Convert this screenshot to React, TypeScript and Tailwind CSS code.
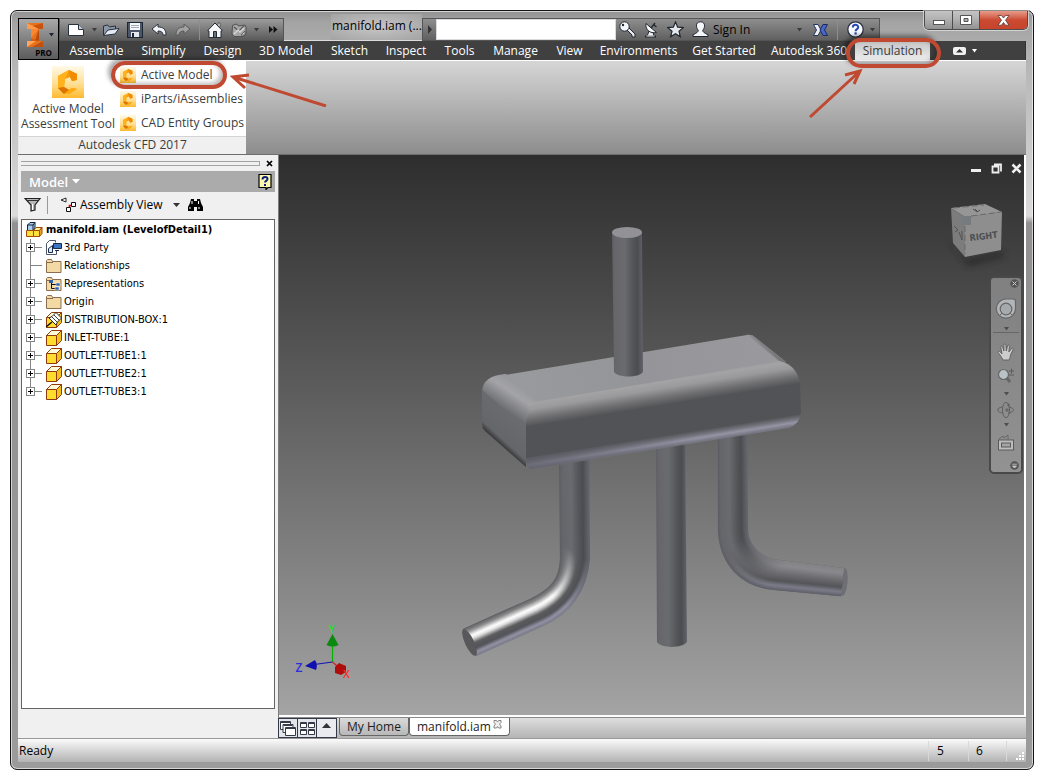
import React from "react";

type Pt = [number, number];

/* ---------- small icons ---------- */

const NewFileIcon = () => (
  <svg width="18" height="16" viewBox="0 0 18 16">
    <path d="M1.500 2.500h10l5 5v6h-15z" fill="#fdfdfd" stroke="#26303f" />
    <path d="M11.500 2.500v5h5" fill="#c9d0dc" stroke="#26303f" />
  </svg>
);
const OpenIcon = () => (
  <svg width="18" height="16" viewBox="0 0 18 16">
    <path d="M1.500 13V4l4-1 2 2 6-1v3" fill="#8d97a8" stroke="#26303f" />
    <path d="M1.500 13.500 6 8l11-1.500-4 5.500z" fill="#e6ebf3" stroke="#26303f" />
  </svg>
);
const SaveIcon = () => (
  <svg width="16" height="16" viewBox="0 0 16 16">
    <rect x=".5" y=".5" width="15" height="15" fill="#4b5768" stroke="#1c2532" />
    <rect x="3" y="1" width="10" height="7" fill="#f4f6fa" />
    <path d="M4 3.500h8M4 5.500h8" stroke="#a0a8b5" />
    <rect x="4" y="10" width="8" height="5" fill="#e4e8ef" />
    <rect x="5" y="11" width="2" height="4" fill="#1c2532" />
  </svg>
);
const UndoIcon = ({ dim = false }: { dim?: boolean }) => (
  <svg width="16" height="14" viewBox="0 0 16 14" className={dim ? "-scale-x-100" : ""}>
    <path
      d="M1 6 7 1v3c5 0 8 2 8 8h-3c0-3-2-4-5-4v3z"
      fill={dim ? "#a2a2a2" : "#f2f4f8"}
      stroke={dim ? "#5a5a5a" : "#2b3443"}
    />
  </svg>
);
const HomeIcon = () => (
  <svg width="16" height="16" viewBox="0 0 16 16">
    <path d="M11 1h2v4h-2z" fill="#f4f4f4" stroke="#222" strokeWidth=".6" />
    <path d="M.700 8.500 8 1l7.300 7.500-1.300.5v6.500H2V9z" fill="#f8f8f8" stroke="#222b38" />
    <path d="M6.500 15V9.500h3V15" fill="#68727f" stroke="#222b38" />
  </svg>
);
const UpdateIcon = () => (
  <svg width="16" height="16" viewBox="0 0 16 16">
    <path d="M1.500 3.500 5 2l3 2 6-1 1 2v7l-3 2.500H3L1 12z" fill="#a6a6a6" stroke="#505050" />
    <path d="m3 5 5 4 5-5" fill="none" stroke="#555" strokeWidth="1.200" />
    <path d="m3 12 4-4 2 2 4-4" fill="none" stroke="#dadada" strokeWidth="1.400" />
    <path d="M10 13h4V9z" fill="#cfcfcf" stroke="#505050" strokeWidth=".8" />
  </svg>
);
const Caret = ({ className = "text-[#3a3a3a]" }: { className?: string }) => (
  <svg width="7" height="4" viewBox="0 0 7 4" className={className}>
    <path d="M1 0h5L3.500 3.500z" fill="currentColor" />
  </svg>
);
const KeyIcon = () => (
  <svg width="17" height="17" viewBox="0 0 17 17">
    <path d="m7 8 2-2 7 7v3h-3v-2l-1-1-1-1-1-1z" fill="#e9ebf0" stroke="#20262f" />
    <circle cx="5.500" cy="5.500" r="4.700" fill="#f6f7fa" stroke="#20262f" />
    <circle cx="4" cy="4" r="1.200" fill="#20262f" />
  </svg>
);
const DishIcon = () => (
  <svg width="15" height="17" viewBox="0 0 15 17">
    <path d="M3 15.500 5 10l4 1 1 4.500z" fill="#eef0f4" stroke="#20262f" />
    <path d="M2 2.500c-1 6 4 10.500 10.500 9z" fill="#f6f7fa" stroke="#20262f" />
    <path d="m7 7 4-5M9.500 3.500l3 2.500" stroke="#20262f" strokeWidth="1.300" />
    <path d="M1 15.500h11" stroke="#20262f" strokeWidth="2" />
    <path d="M2.500 15h8" stroke="#f6f7fa" />
  </svg>
);
const StarIcon = () => (
  <svg width="17" height="17" viewBox="0 0 17 17">
    <path
      d="m8.500 1 2.200 5.200 5.600.4-4.300 3.700 1.400 5.500-4.900-3-4.900 3L5 10.300.700 6.600l5.600-.4z"
      fill="#e4e7ec"
      stroke="#20262f"
      strokeWidth="1.200"
    />
  </svg>
);
const UserIcon = () => (
  <svg width="17" height="17" viewBox="0 0 17 17">
    <path
      d="M8.500.800c-3 0-4.300 2-4 4.500.2 2 1 3 1.800 4-.2 2-1.800 2.700-5.300 4.500v1.700h15v-1.700c-3.500-1.800-5.100-2.500-5.300-4.500.8-1 1.600-2 1.800-4 .3-2.500-1-4.500-4-4.500z"
      fill="#f4f5f8"
      stroke="#20262f"
    />
  </svg>
);
const ExchangeIcon = () => (
  <svg width="15" height="14" viewBox="0 0 15 14">
    <path d="M.500 1.500H5L8 7l-3 5.500H.500L3.500 7z" fill="#eef1fa" stroke="#27355e" />
    <path d="M14.500 1.500H10L7 7l3 5.500h4.500L11.500 7z" fill="#4668c8" stroke="#1b2a66" />
  </svg>
);
const HelpIcon = () => (
  <svg width="17" height="17" viewBox="0 0 17 17">
    <circle cx="8.500" cy="8.500" r="7.700" fill="#f7f9ff" stroke="#2a3140" strokeWidth="1.300" />
    <path d="M5.800 6.500c0-3.600 5.600-3.400 5.400-.3 0 2-2.600 1.900-2.600 4" fill="none" stroke="#274bb0" strokeWidth="2" />
    <rect x="7.500" y="11.300" width="2.200" height="2.200" fill="#274bb0" />
  </svg>
);

const CfdIcon = ({ size }: { size: number }) => (
  <svg width={size} height={size} viewBox="0 0 32 32" className="shrink-0">
    <defs>
      <linearGradient id="cfdBg" x1="0" y1="0" x2="0" y2="1">
        <stop offset="0" stopColor="#fff9e8" />
        <stop offset=".55" stopColor="#ffdf94" />
        <stop offset="1" stopColor="#fdb92e" />
      </linearGradient>
    </defs>
    <rect width="32" height="32" fill="url(#cfdBg)" />
    <path d="M6 10 17 4l8 4v6l-5 1-2-4-5 2-1 8 5 3 3-2 5 1-8 5H12l-6-6z" fill="#f59c0b" />
    <path d="m6 10 11-6-4 9-1 8-6 1z" fill="#ffb21c" />
    <path d="m17 4 8 4v6l-5 1-2-4z" fill="#f38b00" />
    <path d="m12 21 5 3-5 4-6-6z" fill="#dd7300" />
    <path d="m17 24 3-2 5 1-8 5h-5z" fill="#ffab12" />
  </svg>
);

const ProLogo = () => (
  <svg width="18" height="26" viewBox="0 0 18 26">
    <path d="M1 1h16v6h-4v12h4v6H1v-6h4V7H1z" fill="#e8711c" />
    <path d="m1 1 12 6H1z" fill="#ff9a4a" />
    <path d="M17 1v6h-4L7 4z" fill="#c9530d" />
    <path d="M5 7h8L5 16z" fill="#f98632" />
    <path d="M13 7v12H9z" fill="#b84a0b" />
    <path d="m5 16 8 3-8 1z" fill="#d35e12" />
    <path d="M1 25v-6l9 0z" fill="#ffa55e" />
    <path d="M17 19v6H6z" fill="#bf500f" />
  </svg>
);

/* ---------- tree icons ---------- */

const FolderIcon = ({ views = false }: { views?: boolean }) => (
  <svg width="16" height="16" viewBox="0 0 16 16">
    <path d="M.500 14.500v-12l1-1h4l1 2h8.500v11z" fill="#f3d9a4" stroke="#8b6d4f" />
    <path d="M1 4.500h6" stroke="#8b6d4f" />
    {views && (
      <g>
        <path d="M5.500 6v6.500H10M5.500 8.500H11" fill="none" stroke="#111" />
        <rect x="3" y="4" width="4" height="3" fill="#2f5fae" />
        <rect x="10" y="7" width="4" height="3" fill="#2f5fae" stroke="#fff" strokeWidth=".5" />
        <rect x="9" y="11" width="4" height="3" fill="#2f5fae" stroke="#fff" strokeWidth=".5" />
      </g>
    )}
  </svg>
);
const PartIcon = ({ pinned = false }: { pinned?: boolean }) => (
  <svg width="16" height="16" viewBox="0 0 16 16">
    <path d="M.500 5.500h10v10H.500z" fill="#ffdc2e" stroke="#8e3a0a" />
    <path d="m.500 5.500 5-5h10l-5 5z" fill="#fffbd8" stroke="#8e3a0a" />
    <path d="m10.500 5.500 5-5v10l-5 5z" fill="#f2c21a" stroke="#8e3a0a" />
    {pinned && (
      <g>
        <path d="m0 15 6-5" stroke="#111" strokeWidth="1.400" />
        <path d="m3 6 7 7 1.500-3L15.500 6 10 .500 6 4.500z" fill="#fff" stroke="#111" strokeWidth=".9" />
        <path d="m6 5 5 5M8 3l5 5" stroke="#111" strokeWidth=".8" />
      </g>
    )}
  </svg>
);
const AssemblyIcon = () => (
  <svg width="17" height="16" viewBox="0 0 17 16">
    <path d="M1.500 3 4 .500h5V6L7 8.500H1.500z" fill="#a9cdf0" stroke="#12223a" />
    <path d="M1.500 3H7v5.500M7 3 9 .500" fill="none" stroke="#12223a" />
    <path d="M.500 8.500h7v6h-7zM7.500 8.500h6v6h-6z" fill="#ffe03a" stroke="#a04a08" />
    <path d="m7.500 8.500 2.500-3h6l-2.500 3z" fill="#fff3a0" stroke="#a04a08" />
    <path d="m13.500 8.500 2.500-3v6l-2.500 3z" fill="#efa51e" stroke="#a04a08" />
  </svg>
);
const ThirdPartyIcon = () => (
  <svg width="16" height="16" viewBox="0 0 16 16">
    <path d="M9.500 2.500v-2h-6l-3 3v11h10V11" fill="#fff" stroke="#4c5566" />
    <path d="M7.500 3.500h8v5h-8z" fill="#3c74c0" stroke="#16294a" />
    <path d="M9 10.500h4" stroke="#16294a" />
    <path d="m2.500 8.500 4-3v7h-4z" fill="#dfe9f8" stroke="#16294a" />
  </svg>
);

/* ---------- header ---------- */

const ribbonTabs = [
  "Assemble",
  "Simplify",
  "Design",
  "3D Model",
  "Sketch",
  "Inspect",
  "Tools",
  "Manage",
  "View",
  "Environments",
  "Get Started",
  "Autodesk 360",
];

const IconButton = ({ label, children }: { label: string; children: React.ReactNode }) => (
  <button aria-label={label} className="flex h-5 shrink-0 items-center justify-center">
    {children}
  </button>
);

const Header = () => (
  <header className="flex">
    <button
      aria-label="Application menu"
      className="mt-[7px] flex h-[42px] w-[41px] shrink-0 flex-col border border-black bg-gradient-to-b from-[#a9a9a9] to-[#5c5c5c] pl-1 pt-[3px]"
    >
      <span className="flex items-center gap-1 pl-[3px]">
        <ProLogo />
        <Caret className="text-[#1b2433]" />
      </span>
      <span className="pl-[6px] text-[8px] font-bold leading-[9px] text-black">PRO</span>
    </button>
    <div className="flex min-w-0 flex-1 flex-col">
      <div className="-mr-[2px] flex h-[30px] items-end">
        <div className="flex h-[23px] w-[225px] shrink-0 items-center border border-[#555] bg-gradient-to-b from-[#9c9c9c] to-[#5b5b5b] pl-[7px]">
          <IconButton label="New"><NewFileIcon /></IconButton>
          <div className="w-[17px] pl-[6px]"><Caret /></div>
          <IconButton label="Open"><OpenIcon /></IconButton>
          <div className="w-[7px]" />
          <IconButton label="Save"><SaveIcon /></IconButton>
          <div className="w-2" />
          <IconButton label="Undo"><UndoIcon /></IconButton>
          <div className="w-2" />
          <IconButton label="Redo"><UndoIcon dim /></IconButton>
          <div className="ml-2 mr-[7px] h-5 border-l border-[#8d8d8d]" />
          <IconButton label="Home"><HomeIcon /></IconButton>
          <div className="w-2" />
          <IconButton label="Update"><UpdateIcon /></IconButton>
          <div className="w-[22px] pl-[6px]"><Caret /></div>
          <IconButton label="More commands">
            <svg width="9" height="7" viewBox="0 0 9 7"><path d="m0 0 4 3.500L0 7zM4.500 0l4 3.500-4 3.500z" fill="#111" /></svg>
          </IconButton>
        </div>
        <div className="flex-1 self-end border-b border-[#dcdcdc]" />
        <h1 className="h-[27px] w-[91px] shrink-0 whitespace-nowrap border-b border-[#dcdcdc] bg-[radial-gradient(ellipse,#c6c6c6,#a3a3a3)] pl-[1px] text-[12px] leading-6 text-black">
          manifold.iam (...
        </h1>
        <div className="flex h-[23px] w-[458px] shrink-0 items-center border border-[#555] bg-gradient-to-b from-[#8e8e8e] to-[#606060]">
          <svg width="13" height="9" viewBox="0 0 13 9"><path d="m5 0 4 4.500L5 9z" fill="#333" /></svg>
          <input aria-label="Search" className="h-[21px] w-[180px] border border-[#d8dade] bg-white px-1 text-[12px]" />
          <div className="flex items-center gap-2 pl-[3px]">
            <IconButton label="Subscription"><KeyIcon /></IconButton>
            <IconButton label="Communication"><DishIcon /></IconButton>
            <IconButton label="Favorites"><StarIcon /></IconButton>
            <button className="flex items-center gap-1 text-[12px] leading-5 text-black"><UserIcon />Sign In</button>
          </div>
          <div className="ml-auto mr-[10px]"><Caret /></div>
          <IconButton label="Exchange"><ExchangeIcon /></IconButton>
          <div className="mx-[9px] h-5 border-l border-[#8d8d8d]" />
          <IconButton label="Help"><HelpIcon /></IconButton>
          <div className="w-[15px] pl-[5px]"><Caret /></div>
        </div>
        <div className="ml-[44px] flex h-[19px] w-[104px] shrink-0 self-start rounded-b-[5px] border border-t-0 border-[#4c4c4c] shadow-[0_0_0_1px_#ffffff80]">
          <button aria-label="Minimize" className="flex w-7 items-center justify-center rounded-bl border-r border-[#4c4c4c] bg-gradient-to-b from-[#c4c4c4] via-[#b1b1b1] via-45% to-[#929292]">
            <svg width="12" height="5" viewBox="0 0 12 5" className="mt-1"><rect x=".5" y=".5" width="11" height="4" fill="#fff" stroke="#555" /></svg>
          </button>
          <button aria-label="Maximize" className="flex w-[27px] items-center justify-center border-r border-[#4c4c4c] bg-gradient-to-b from-[#c4c4c4] via-[#b1b1b1] via-45% to-[#929292]">
            <svg width="12" height="10" viewBox="0 0 12 10"><path d="M.500.500h11v9H.500zM4 3.500v3h4v-3z" fill="#fff" fillRule="evenodd" stroke="#555" /></svg>
          </button>
          <button aria-label="Close" className="flex flex-1 items-center justify-center rounded-br bg-gradient-to-b from-[#e79c8c] via-[#cb4a32] via-50% to-[#c8432b]">
            <svg width="13" height="11" viewBox="0 0 13 11"><path d="M1 .500h3.500l2 2.500 2-2.500H12L8.500 5.200l3.500 5H8.500l-2-2.700-2 2.700H1l3.500-5z" fill="#fff" stroke="#5a3a3a" strokeWidth=".8" /></svg>
          </button>
        </div>
      </div>
      <nav
        aria-label="Ribbon"
        className="grid h-[19px] grid-cols-[71px_63px_55px_72px_55px_58px_49px_63px_45px_93px_78px_92px_75px_1fr] border-r border-[#333] bg-[#404040] pl-[2px] text-[12px] leading-[19px] text-white"
      >
        {ribbonTabs.map((t) => (
          <button key={t} className="whitespace-nowrap text-center leading-[19px]">{t}</button>
        ))}
        <button className="relative bg-gradient-to-b from-[#c5c3c3] to-[#ededed] text-center leading-[19px] text-[#3a3a3a]">
          Simulation
          <span className="pointer-events-none absolute -left-[9px] -top-[3px] z-10 h-[30px] w-[95px] rounded-full border-4 border-[#bf4a31] shadow-[-3px_-3px_4px_#0006,inset_-3px_-2px_4px_#0004]" />
          <svg width="56" height="52" viewBox="0 0 56 52" className="pointer-events-none absolute -left-[47px] top-[25px] z-10">
            <path d="M2 51 52 5M37 9l15-4-6 13" fill="none" stroke="#bf4a31" strokeWidth="3" />
          </svg>
        </button>
        <div className="flex items-center gap-[5px] pl-[23px]">
          <button aria-label="Minimize ribbon">
            <svg width="13" height="8" viewBox="0 0 13 8"><rect width="13" height="8" rx="2" fill="#f1f1f1" /><path d="M3 5.500h7L6.500 2z" fill="#333" /></svg>
          </button>
          <Caret className="text-white" />
        </div>
      </nav>
    </div>
  </header>
);

const Ribbon = () => (
  <section aria-label="Simulation tools" className="relative flex h-[95px] border-b border-t border-t-white border-b-[#6e6e6e] bg-gradient-to-b from-[#d6d6d6] to-[#8d8d8d] text-[12px] text-[#3c3c3c]">
    <div className="flex w-[228px] flex-col border-l border-[#e8e8e8] bg-white">
      <div className="flex flex-1">
        <button className="flex w-[98px] shrink-0 flex-col items-center pt-[5px] leading-[15px]">
          <CfdIcon size={32} />
          <span className="mt-[3px] whitespace-nowrap">Active Model</span>
          <span className="whitespace-nowrap">Assessment Tool</span>
        </button>
        <div className="flex flex-col pl-[3px] pt-[2px]">
          <button className="relative flex h-6 items-center gap-[5px] whitespace-nowrap">
            <CfdIcon size={16} />
            Active Model
            <span className="pointer-events-none absolute -left-[9px] -top-[2px] h-7 w-[116px] rounded-full border-4 border-[#bf4a31] shadow-[-3px_-3px_4px_#0005,inset_-3px_-2px_4px_#0004]" />
          </button>
          <button className="flex h-6 items-center gap-[5px] whitespace-nowrap"><CfdIcon size={16} />iParts/iAssemblies</button>
          <button className="flex h-6 items-center gap-[5px] whitespace-nowrap"><CfdIcon size={16} />CAD Entity Groups</button>
        </div>
      </div>
      <div className="h-[18px] border-t border-[#d4d4d4] bg-[#f0f0f0] text-center leading-4">Autodesk CFD 2017</div>
    </div>
    <svg width="97" height="34" viewBox="0 0 97 34" className="pointer-events-none absolute left-[212px] top-[12px]">
      <path d="M96 33 3 4M15 15 3 4l16-2" fill="none" stroke="#bf4a31" strokeWidth="3" />
    </svg>
  </section>
);

/* ---------- model browser ---------- */

const treeItems: { label: string; icon: React.ReactNode; leaf?: boolean }[] = [
  { label: "3rd Party", icon: <ThirdPartyIcon /> },
  { label: "Relationships", icon: <FolderIcon />, leaf: true },
  { label: "Representations", icon: <FolderIcon views /> },
  { label: "Origin", icon: <FolderIcon /> },
  { label: "DISTRIBUTION-BOX:1", icon: <PartIcon pinned /> },
  { label: "INLET-TUBE:1", icon: <PartIcon /> },
  { label: "OUTLET-TUBE1:1", icon: <PartIcon /> },
  { label: "OUTLET-TUBE2:1", icon: <PartIcon /> },
  { label: "OUTLET-TUBE3:1", icon: <PartIcon /> },
];

const TreeBranch = ({ leaf, last }: { leaf?: boolean; last?: boolean }) => (
  <svg width="20" height="18" viewBox="0 0 20 18" shapeRendering="crispEdges">
    <path d={last ? "M6.500 0v9M6 8.500h12" : "M6.500 0v18M6 8.500h12"} stroke="#848484" fill="none" />
    {!leaf && (
      <g>
        <rect x="2.500" y="4.500" width="8" height="8" fill="#fff" stroke="#848484" />
        <path d="M4 8.500h5M6.500 6v5" stroke="#000" />
      </g>
    )}
  </svg>
);

const Browser = () => (
  <aside className="flex w-[260px] shrink-0 flex-col bg-[#f0f0f0] pl-[3px] pr-[3px]">
    <div className="flex h-4 items-center gap-[6px]">
      <div className="h-[5px] flex-1 border border-l-0 border-[#a3a3a3]" />
      <button aria-label="Close panel" className="w-[9px]">
        <svg width="7" height="7" viewBox="0 0 7 7"><path d="m1 1 5 5M6 1 1 6" stroke="#000" strokeWidth="1.700" /></svg>
      </button>
    </div>
    <div className="flex h-[21px] items-center justify-between bg-[#ababab] pl-2 pr-[3px]">
      <button className="flex items-center gap-1 text-[13px] font-semibold leading-5 text-white">
        Model
        <svg width="8" height="5" viewBox="0 0 8 5"><path d="M0 0h8L4 4.500z" fill="#fff" /></svg>
      </button>
      <button aria-label="Help on browser">
        <svg width="14" height="16" viewBox="0 0 14 16">
          <path d="M1 .500h12v13h-3l-2 2v-2H1z" fill="#fff9b0" stroke="#000" strokeWidth="1.200" />
          <path d="M4.500 5.500c0-3.500 5-3.300 5-.5 0 1.800-2.500 1.800-2.500 3.500M7 10v2" fill="none" stroke="#0a1e82" strokeWidth="2" />
        </svg>
      </button>
    </div>
    <div className="flex h-[27px] items-center pb-[2px] pl-[3px] text-[12px] text-black">
      <button aria-label="Filter">
        <svg width="18" height="15" viewBox="0 0 18 15">
          <path d="M1 1.500h15L11 8v5l-4 1V8z" fill="#b9b9b9" stroke="#222" strokeWidth="1.200" />
          <path d="M3 3.500h11" stroke="#333" />
          <path d="M8.500 7v6" stroke="#fff" />
        </svg>
      </button>
      <div className="ml-[5px] h-[18px] border-l border-[#999]" />
      <button className="ml-3 flex items-center gap-[3px] whitespace-nowrap">
        <svg width="17" height="16" viewBox="0 0 17 16">
          <path d="m1 3 5-2v4z" fill="#fff" stroke="#111" strokeWidth=".9" />
          <path d="M9.500 14V8.500H13" fill="none" stroke="#d01010" strokeWidth="1.600" />
          <path d="M6.500 10.500h4v4h-4zM11.500 5.500h4v4h-4z" fill="#fff" stroke="#111" />
        </svg>
        Assembly View
        <svg width="15" height="4" viewBox="0 0 15 4"><path d="M7 0h7l-3.500 4z" fill="#333" /></svg>
      </button>
      <button aria-label="Find" className="ml-[7px]">
        <svg width="15" height="14" viewBox="0 0 15 14">
          <path d="M3 1h3v2h3V1h3l1 4 2 4v4H9V9H6v4H0V9l2-4z" fill="#000" />
          <path d="M2 9v2M11 9v2M4 3v3M10.500 3v3" stroke="#fff" />
        </svg>
      </button>
    </div>
    <div className="mb-[29px] flex-1 border border-[#646464] bg-white pt-[1px] font-['DejaVu_Sans_Condensed','DejaVu_Sans',sans-serif] text-[11px] leading-[18px] text-black">
      <div className="flex h-[18px] items-center gap-[3px] pl-1 font-bold"><AssemblyIcon />manifold.iam (LevelofDetail1)</div>
      <ul>
        {treeItems.map((item, i) => (
          <li key={item.label} className="flex h-[18px] items-center gap-[2px] whitespace-nowrap pl-[2px]">
            <TreeBranch leaf={item.leaf} last={i === treeItems.length - 1} />
            {item.icon}
            <span>{item.label}</span>
          </li>
        ))}
      </ul>
    </div>
  </aside>
);

/* ---------- 3D scene ---------- */

type Ramp = [number, number, number, number][];

const shaftRamp: Ramp = [
  [0, 94, 94, 101],
  [0.1, 102, 102, 107],
  [0.4, 106, 107, 111],
  [0.68, 84, 85, 89],
  [0.82, 76, 77, 80],
  [1, 98, 98, 107],
];
const glossRamp: Ramp = [
  [0, 100, 100, 102],
  [0.12, 135, 135, 137],
  [0.32, 255, 255, 255],
  [0.42, 225, 225, 226],
  [0.6, 92, 92, 94],
  [0.78, 84, 84, 90],
  [0.92, 148, 148, 166],
  [1, 128, 128, 144],
];
const dullRamp: Ramp = [
  [0, 98, 98, 108],
  [0.15, 124, 124, 138],
  [0.32, 84, 85, 88],
  [0.6, 112, 112, 116],
  [0.85, 138, 138, 142],
  [1, 132, 132, 134],
];

const shade = (ramp: Ramp, t: number) => {
  let i = 1;
  while (i < ramp.length - 1 && t > ramp[i][0]) i++;
  const a = ramp[i - 1];
  const b = ramp[i];
  const k = (t - a[0]) / (b[0] - a[0]);
  const c = [1, 2, 3].map((n) => Math.round(a[n] + (b[n] - a[n]) * k));
  return `rgb(${c.join(",")})`;
};

const STRIPS = 32;

/* A bent pipe drawn as thin strips interpolated between its two silhouette edges. */
const Pipe = ({ a, b, ramp }: { a: Pt[]; b: Pt[]; ramp: Ramp }) => (
  <g fill="none" strokeWidth="1.8">
    {Array.from({ length: STRIPS + 1 }, (_, i) => {
      const t = i / STRIPS;
      const edge = 0.8 / 29;
      const s = edge + t * (1 - 2 * edge);
      const p = a.map((q, n) => `${(q[0] + (b[n][0] - q[0]) * s).toFixed(2)},${(q[1] + (b[n][1] - q[1]) * s).toFixed(2)}`);
      return <path key={i} d={`M${p[0]}L${p[1]}C${p[2]} ${p[3]} ${p[4]}L${p[5]}`} stroke={shade(ramp, t)} />;
    })}
  </g>
);

const leftA: Pt[] = [[559, 455], [560, 558], [560, 580], [549, 590], [530, 599], [463, 629]];
const leftB: Pt[] = [[589, 452], [590, 558], [588, 592], [568, 614], [545, 625], [476, 656]];
const rightA: Pt[] = [[718, 430], [718, 532], [720, 566], [742, 587], [774, 590], [841, 596]];
const rightB: Pt[] = [[747, 426], [748, 532], [750, 546], [762, 559], [780, 560], [844, 568]];

const Scene = () => (
  <svg className="absolute inset-0 h-full w-full" viewBox="279 155 745 560" role="img" aria-label="Manifold assembly">
    <defs>
      <linearGradient id="shaft">
        <stop offset="0" stopColor="#5e5e65" />
        <stop offset=".1" stopColor="#66666b" />
        <stop offset=".4" stopColor="#6a6b6f" />
        <stop offset=".68" stopColor="#545559" />
        <stop offset=".82" stopColor="#4c4d50" />
        <stop offset="1" stopColor="#62626b" />
      </linearGradient>
      <linearGradient id="topFace" gradientUnits="userSpaceOnUse" x1="520" y1="380" x2="750" y2="345">
        <stop offset="0" stopColor="#999a9d" />
        <stop offset=".5" stopColor="#949598" />
        <stop offset=".52" stopColor="#959498" />
        <stop offset="1" stopColor="#99989c" />
      </linearGradient>
      <linearGradient id="frontFace" gradientUnits="userSpaceOnUse" x1="640" y1="380" x2="651" y2="449">
        <stop offset="0" stopColor="#98989b" />
        <stop offset=".08" stopColor="#a3a3a6" />
        <stop offset=".17" stopColor="#9a9a9d" />
        <stop offset=".3" stopColor="#707073" />
        <stop offset=".41" stopColor="#525356" />
        <stop offset=".84" stopColor="#525356" />
        <stop offset=".9" stopColor="#72727b" />
        <stop offset=".95" stopColor="#9494a5" />
        <stop offset="1" stopColor="#777783" />
      </linearGradient>
      <linearGradient id="edgeFade" gradientUnits="userSpaceOnUse" x1="526" y1="0" x2="700" y2="0">
        <stop offset="0" stopColor="#5c5c66" stopOpacity=".7" />
        <stop offset="1" stopColor="#5c5c66" stopOpacity="0" />
      </linearGradient>
      <linearGradient id="leftFillet" gradientUnits="userSpaceOnUse" x1="517" y1="384" x2="501" y2="408">
        <stop offset="0" stopColor="#98999c" />
        <stop offset=".35" stopColor="#a4a4a8" />
        <stop offset="1" stopColor="#6a6b6f" />
      </linearGradient>
      <linearGradient id="leftFace" gradientUnits="userSpaceOnUse" x1="504" y1="409" x2="485" y2="430">
        <stop offset="0" stopColor="#6a6b6f" />
        <stop offset=".82" stopColor="#65666a" />
        <stop offset="1" stopColor="#3c3c3e" />
      </linearGradient>
      <linearGradient id="rightFillet" gradientUnits="userSpaceOnUse" x1="766" y1="354" x2="773" y2="347">
        <stop offset="0" stopColor="#99989c" />
        <stop offset="1" stopColor="#5e5e60" />
      </linearGradient>
      <linearGradient id="fadeLeft" gradientUnits="userSpaceOnUse" x1="580" y1="556" x2="552" y2="596">
        <stop offset="0" stopColor="#000" />
        <stop offset="1" stopColor="#fff" />
      </linearGradient>
      <linearGradient id="fadeRight" gradientUnits="userSpaceOnUse" x1="736" y1="545" x2="776" y2="574">
        <stop offset="0" stopColor="#000" />
        <stop offset="1" stopColor="#fff" />
      </linearGradient>
      <mask id="maskLeft" maskUnits="userSpaceOnUse" x="440" y="430" width="170" height="240">
        <rect x="440" y="430" width="170" height="240" fill="url(#fadeLeft)" />
      </mask>
      <mask id="maskRight" maskUnits="userSpaceOnUse" x="700" y="410" width="170" height="220">
        <rect x="700" y="410" width="170" height="220" fill="url(#fadeRight)" />
      </mask>
      <filter id="soft" x="-30%" y="-30%" width="160%" height="160%"><feGaussianBlur stdDeviation="3" /></filter>
    </defs>

    <Pipe a={leftA} b={leftB} ramp={shaftRamp} />
    <g mask="url(#maskLeft)"><Pipe a={leftA} b={leftB} ramp={glossRamp} /></g>
    <ellipse cx="469.500" cy="642.500" rx="4.500" ry="14.500" fill="#58585a" transform="rotate(-25 469.500 642.500)" />

    <ellipse cx="843.500" cy="582" rx="4" ry="14" fill="#6e6e74" transform="rotate(5 843.500 582)" />
    <Pipe a={rightA} b={rightB} ramp={shaftRamp} />
    <g mask="url(#maskRight)"><Pipe a={rightA} b={rightB} ramp={dullRamp} /></g>

    <path d="M656 440h29l2 202c-4 6-25 7-30 0z" fill="url(#shaft)" />

    <path d="M499 376 747 335Q752 334 756 338L786 362 534 404Z" fill="url(#topFace)" />
    <path d="M747 335Q752 334 756 338L789 365 780 362Z" fill="url(#rightFillet)" />
    <path d="M505 374Q483 376 482 391L482 395 526 431Q526 412 536 402L506 374Z" fill="url(#leftFillet)" />
    <path d="M482 390 526 427V467L485 431Q482 428 482 424Z" fill="url(#leftFace)" />
    <path d="M534 402 780 361Q798 366 800 384L801 412Q800 424 789 428L532 469Q528 469 526 466V426Q526 410 534 402Z" fill="url(#frontFace)" />
    <path d="M526 458 700 431V442L532 469Q528 469 526 466Z" fill="url(#edgeFade)" />

    <path d="M612 232h30l1 140c-4 6-25 6-29 0z" fill="url(#shaft)" />
    <ellipse cx="627" cy="232.500" rx="15" ry="5.500" fill="#929296" />

    <g>
      <path d="m948 240 18 19 38-8v6l-36 10z" fill="#222" opacity=".6" filter="url(#soft)" />
      <path d="m951 208 34-4 17 8-37 5z" fill="#969696" />
      <path d="m951 208 14 9v40l-12-14z" fill="#7c7c7c" />
      <path d="m965 217 37-5-1 38-36 7z" fill="#8e8e8e" />
      <path d="M961 216h10v9h-10z" fill="#767b80" />
      <path d="m954 208 30-3M971 216l30-4M965 226v28" stroke="#6b6b6b" strokeDasharray="6 3" fill="none" />
      <path d="m973 209 4 3 3-2m-5-1 3 3" stroke="#4f4f4f" fill="none" />
      <path d="m954 226 4 4-3 2m4 0 3 8v-9" stroke="#555" fill="none" />
      <text x="970" y="241" transform="rotate(-7 971 241)" fontSize="9" fontWeight="600" fill="#4c4f52" fontFamily="'DejaVu Sans Condensed', sans-serif">RIGHT</text>
    </g>

    <g>
      <path d="M332.500 662V642" stroke="#00b400" strokeWidth="1.200" />
      <path d="m332.500 662-22 3" stroke="#1414b4" strokeWidth="1.200" />
      <path d="m332.500 662 7 6" stroke="#d02020" strokeWidth="1.200" />
      <path d="m332.500 634 6 11q-6 3-12 0z" fill="#0a8a10" />
      <path d="m305 666 10-6q3 5 1 10z" fill="#1010b0" />
      <path d="m335 667 4-4 7 3v6l-5 3-6-2z" fill="#b00c0c" />
      <text x="328.500" y="633" fontSize="11" fontWeight="600" fill="#22e02a">Y</text>
      <text x="295.500" y="672" fontSize="12" fontWeight="600" fill="#2c2ce0">Z</text>
      <text x="343" y="678" fontSize="11" fontWeight="600" fill="#ff2c2c">X</text>
    </g>
  </svg>
);

const NavCaret = () => <div className="flex h-3 items-center justify-center"><Caret className="text-[#4c4c4c]" /></div>;

const NavBar = () => (
  <div className="absolute right-[1px] top-[121px] flex h-[198px] w-[34px] flex-col items-center rounded-[5px] border-2 border-[#494949] bg-gradient-to-b from-[#808080] to-[#929292]">
    <button aria-label="Close navigation bar" className="mr-[2px] mt-[1px] self-end">
      <svg width="9" height="9" viewBox="0 0 9 9"><circle cx="4.500" cy="4.500" r="4.300" fill="#555" /><path d="m2.500 2.500 4 4m0-4-4 4" stroke="#ccc" /></svg>
    </button>
    <button aria-label="Steering wheel" className="mt-[10px]">
      <svg width="22" height="22" viewBox="0 0 22 22">
        <path d="M11 1h7q2.500 0 2.500 2.500V11a9.600 9.600 0 1 1-9.500-10z" fill="#b3b6b8" stroke="#666" strokeWidth="1.200" />
        <circle cx="11" cy="11" r="5.800" fill="#a6aaad" stroke="#666" strokeWidth="1.200" />
        <path d="m4 18 3-3m11 3-3-3" stroke="#666" />
      </svg>
    </button>
    <div className="mt-[3px]"><NavCaret /></div>
    <div className="mt-[-3px] w-[26px] border-t border-[#666]" />
    <button aria-label="Pan" className="mt-[10px]">
      <svg width="18" height="18" viewBox="0 0 18 18">
        <path d="M6 17C4.500 14 3 12 1.200 9.500.700 8.300 2.200 7.700 3.500 9.200L5 10.800 3.800 4.500C3.600 2.800 5.300 2.600 5.700 4.200L6.900 8V2.200c0-1.700 1.900-1.700 2 0L9.300 8l1.200-5c.4-1.600 2.100-1.200 1.900.4L11.900 9l2.500-3.300c1-1.300 2.400-.3 1.600 1.100L13.500 12c-.3 2-.5 3-1.500 5z" fill="#ccc" stroke="#5b5b5b" strokeWidth=".9" />
      </svg>
    </button>
    <button aria-label="Zoom" className="mt-[6px]">
      <svg width="18" height="18" viewBox="0 0 18 18">
        <path d="m9 10 4 5" stroke="#666" strokeWidth="3" />
        <circle cx="6.500" cy="7.500" r="5" fill="#b9c2c4" stroke="#666" strokeWidth="1.200" />
        <path d="M12 4h5M14.500 1.500v5M12 8h5" stroke="#5c5c5c" />
      </svg>
    </button>
    <div className="mt-[3px]"><NavCaret /></div>
    <button aria-label="Orbit" className="mt-[1px]">
      <svg width="18" height="18" viewBox="0 0 18 18" fill="none" stroke="#5f5f5f">
        <ellipse cx="9" cy="9" rx="3.500" ry="7.700" />
        <path d="M6 12C-1.500 11 0 6.500 5 6.200M12 6c7 1.500 5 5.500-1 6M8 9h4m-2-2v4M10 4h3m-1.500-1.500v3" />
      </svg>
    </button>
    <NavCaret />
    <button aria-label="Look at" className="mt-[3px]">
      <svg width="18" height="18" viewBox="0 0 18 18">
        <path d="m2 5 4-3 1 2 4-3v4" fill="none" stroke="#666" />
        <rect x="1.500" y="6" width="15" height="10" fill="#bdbdbd" stroke="#5a5a5a" />
        <rect x="4.500" y="9" width="9" height="4" fill="#a4a4a8" stroke="#5a5a5a" />
      </svg>
    </button>
    <button aria-label="Navigation bar options" className="mb-[2px] mr-[2px] mt-auto self-end">
      <svg width="9" height="9" viewBox="0 0 9 9"><circle cx="4.500" cy="4.500" r="4.300" fill="#555" /><path d="M2 3.200h5M2.500 5h4l-2 2z" stroke="#ccc" strokeWidth=".8" fill="#ccc" /></svg>
    </button>
  </div>
);

const Viewport = () => (
  <main className="flex min-w-0 flex-1 flex-col border-l border-[#7c7c7c]">
    <div className="relative flex-1 border-b-2 border-r-2 border-white bg-gradient-to-b from-[#2e2e2e] to-[#a4a4a4]">
      <Scene />
      <div className="absolute right-[2px] top-[7px] flex items-center gap-[9px]">
        <button aria-label="Minimize document"><svg width="12" height="12" viewBox="0 0 12 12"><path d="M1 8.500h10" stroke="#eee" strokeWidth="3" /></svg></button>
        <button aria-label="Restore document"><svg width="11" height="11" viewBox="0 0 11 11"><path d="M3 1.500h7v7M1.500 3.500h6v6h-6z" fill="none" stroke="#eee" strokeWidth="1.800" /></svg></button>
        <button aria-label="Close document"><svg width="11" height="11" viewBox="0 0 11 11"><path d="m1.500 1.500 8 8m0-8-8 8" stroke="#eee" strokeWidth="2.600" /></svg></button>
      </div>
      <NavBar />
    </div>
    <div className="-ml-px flex h-[21px] border-t border-[#8a8a8a] bg-gradient-to-b from-[#dedede] to-[#b4b4b4] text-[12px] text-[#1c1c1c]">
      <button aria-label="Cascade" className="flex w-5 items-center justify-center border border-[#333947] bg-[#e2e5ea]">
        <svg width="16" height="15" viewBox="0 0 16 15" fill="#fff" stroke="#333947"><path d="M.500.500h10v8H.500zM1 1.500h9" /><path d="M3 3.500h10v8H3zM3.500 4.500h9" /><path d="M5.500 6.500h10v8h-10zM6 7.500h9" /></svg>
      </button>
      <button aria-label="Arrange" className="flex w-[19px] items-center justify-center border border-l-0 border-[#333947] bg-[#e2e5ea]">
        <svg width="15" height="13" viewBox="0 0 15 13" fill="#fff" stroke="#333947"><path d="M.500.500h6v5h-6zM8.500.500h6v5h-6zM.500 7.500h6v5h-6zM8.500 7.500h6v5h-6zM1 1.500h5M9 1.500h5M1 8.500h5M9 8.500h5" /></svg>
      </button>
      <button aria-label="Scroll tabs" className="flex w-5 justify-center border border-l-0 border-[#333947] bg-[#e9ebee] pt-1">
        <svg width="9" height="5" viewBox="0 0 9 5"><path d="M0 5h9L4.500 0z" fill="#333" /></svg>
      </button>
      <button className="ml-[2px] h-[18px] w-[70px] whitespace-nowrap rounded-b-[4px] border border-t-0 border-[#666] bg-gradient-to-b from-[#dadada] to-[#b8b8b8] leading-[18px]">My Home</button>
      <button className="flex h-[18px] w-[101px] items-center gap-[2px] whitespace-nowrap rounded-b-[4px] border border-t-0 border-[#666] bg-white pl-[7px] leading-[18px]">
        manifold.iam
        <svg width="9" height="9" viewBox="0 0 9 9" className="mb-1"><path d="M1 .500h2.500l1 1.500 1-1.500H8v2L6.500 4 8 6v2H5.500l-1-1.500-1 1.500H1V6l1.500-2L1 2.500z" fill="#eee" stroke="#777" strokeWidth=".9" /></svg>
      </button>
    </div>
  </main>
);

const StatusBar = () => (
  <footer className="flex h-[24px] items-center border-t border-[#999] bg-gradient-to-b from-[#fbfbfb] to-[#b3b3b3] pl-[1px] text-[12px] leading-5 text-black">
    <span>Ready</span>
    <span className="ml-auto w-10 border-l border-[#d8d8d8] pl-2">5</span>
    <span className="w-[38px] border-l border-[#d8d8d8] pl-[7px]">6</span>
    <span className="flex h-5 w-5 items-end border-l border-[#d8d8d8] pl-2">
      <svg width="10" height="10" viewBox="0 0 10 10"><path d="M7 1h2v2H7zM4 4h2v2H4zM7 4h2v2H7zM1 7h2v2H1zM4 7h2v2H4zM7 7h2v2H7z" fill="#fff" /></svg>
    </span>
  </footer>
);

export default function App() {
  return (
    <div className="flex min-h-screen min-w-[1044px] flex-col bg-white p-[10px] font-['Open_Sans','Noto_Sans',sans-serif]">
      <div className="flex flex-1 flex-col rounded-[7px] border border-[#151515] bg-[linear-gradient(to_bottom,#929292,#a4a4a4_12px,#b8b8b8_60px,#dcdada_205px,#929090_212px,#9b9b9b)] px-[7px] pb-[7px] shadow-[inset_0_0_0_1px_#ffffff99]">
        <Header />
        <Ribbon />
        <div className="flex flex-1">
          <Browser />
          <Viewport />
        </div>
        <StatusBar />
      </div>
    </div>
  );
}
